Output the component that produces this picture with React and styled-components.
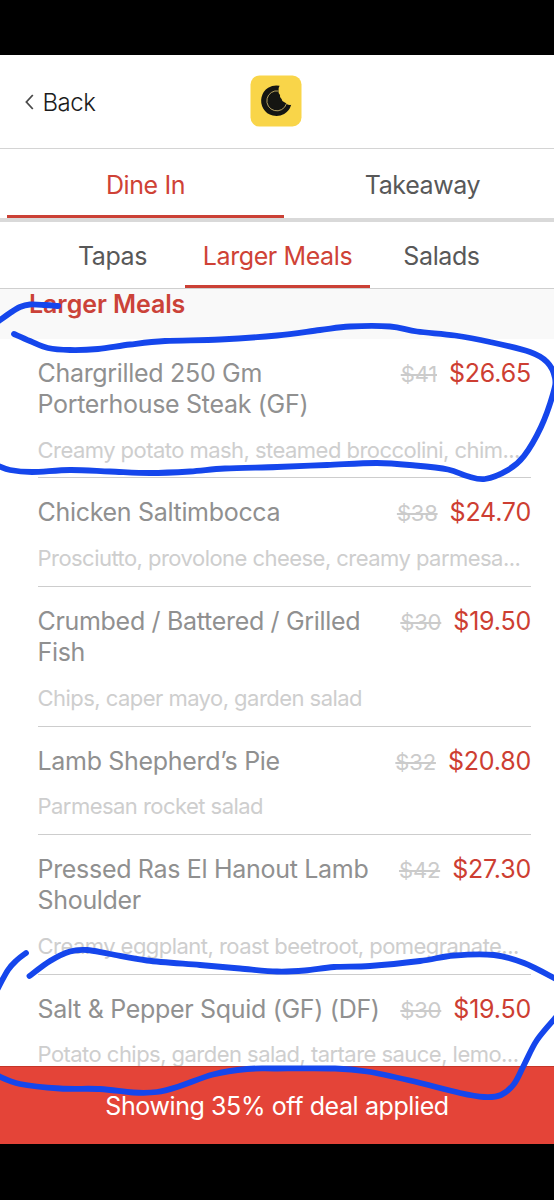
import React from "react";
import styled, { createGlobalStyle } from "styled-components";

const GlobalStyle = createGlobalStyle`
  body {
    margin: 0;
    background: #000;
    font-family: Inter, "Liberation Sans", sans-serif;
  }
`;

const Screen = styled.div`
  position: relative;
  width: 554px;
  height: 1200px;
  padding: 55px 0 56px;
  box-sizing: border-box;
  display: flex;
  flex-direction: column;
  overflow: hidden;
  background: #000;
`;

const Header = styled.header`
  flex: none;
  height: 94px;
  padding: 0 26px 0 24px;
  box-sizing: border-box;
  display: grid;
  grid-template-columns: 1fr 52px 1fr;
  align-items: center;
  background: #fff;
  border-bottom: 1px solid #d4d4d4;
`;

const BackButton = styled.button`
  padding: 2px 0 0;
  border: 0;
  display: flex;
  align-items: center;
  gap: 7.5px;
  background: none;
  color: #1c1c1c;
  font: 300 24px/30px Inter, sans-serif;
  letter-spacing: -0.5px;
  svg {
    margin-top: -2px;
  }
`;

const Logo = styled.svg`
  display: block;
  margin-top: -2px;
`;

const ModeTabs = styled.nav`
  flex: none;
  height: 73px;
  padding: 0 7px;
  box-sizing: border-box;
  display: grid;
  grid-template-columns: 277px 1fr;
  background: #fff;
  border-bottom: 4px solid #d9d9d9;
`;

const Tab = styled.div`
  height: ${props => props.$height}px;
  padding: ${props => props.$padding || "0"};
  box-sizing: border-box;
  border-bottom: 3px solid ${props => (props.$active ? "#cb4035" : "transparent")};
  display: flex;
  justify-content: center;
  align-items: center;
  color: ${props => (props.$active ? "#cf4236" : "#585858")};
  font-size: 25px;
  font-weight: 400;
  letter-spacing: -0.4px;
  white-space: nowrap;
`;

const CategoryTabs = styled.nav`
  flex: none;
  height: 67px;
  padding-left: 40px;
  box-sizing: border-box;
  display: grid;
  grid-template-columns: 145px 185px 143px;
  background: #fff;
  border-bottom: 1px solid #cfcfcf;
`;

const Menu = styled.main`
  flex: 1;
  min-height: 0;
  overflow: hidden;
  background: #fff;
`;

const SectionTitle = styled.h2`
  height: 50px;
  margin: 0;
  padding-left: 29px;
  box-sizing: border-box;
  background: #f9f9f9;
  color: #cb4238;
  font-size: 25px;
  font-weight: 600;
  line-height: 30px;
  letter-spacing: -0.08px;
`;

const Dish = styled.article`
  margin: 0 23px 0 37.5px;
  padding: 19px 0 13.46px;
  border-bottom: 1px solid #cdcdcd;
`;

const DishTop = styled.div`
  display: flex;
  justify-content: space-between;
  align-items: flex-start;
`;

const DishName = styled.h3`
  width: 345px;
  margin: 0;
  color: #909090;
  font-size: 25px;
  font-weight: 400;
  line-height: 30.8px;
  letter-spacing: -0.31px;
  white-space: pre-line;
`;

const Prices = styled.div`
  height: 30.8px;
  display: flex;
  align-items: baseline;
  gap: 12px;
  line-height: 30.8px;
`;

const OldPrice = styled.s`
  color: #cbcbcb;
  font-size: 22px;
  font-weight: 400;
  letter-spacing: -0.2px;
`;

const NewPrice = styled.span`
  color: #cd3e32;
  font-size: 25px;
  font-weight: 400;
  letter-spacing: -0.2px;
`;

const Description = styled.p`
  margin: 16px 0 0;
  color: #cecece;
  font-size: 22px;
  font-weight: 400;
  line-height: 28.4px;
  letter-spacing: -0.54px;
  white-space: nowrap;
`;

const DealBar = styled.footer`
  flex: none;
  height: 78px;
  padding-top: 1px;
  box-sizing: border-box;
  border-top: 1px solid #c53528;
  display: flex;
  justify-content: center;
  align-items: center;
  background: #e44438;
  color: #fff;
  font-size: 25px;
  font-weight: 400;
  line-height: 30px;
  letter-spacing: -0.4px;
`;

const Ink = styled.svg`
  position: absolute;
  top: 0;
  left: 0;
  pointer-events: none;
`;

const dishes = [
  {
    name: "Chargrilled 250 Gm\nPorterhouse Steak (GF)",
    oldPrice: "$41",
    price: "$26.65",
    text: "Creamy potato mash, steamed broccolini, chim...",
  },
  {
    name: "Chicken Saltimbocca",
    oldPrice: "$38",
    price: "$24.70",
    text: "Prosciutto, provolone cheese, creamy parmesa...",
  },
  {
    name: "Crumbed / Battered / Grilled\nFish",
    oldPrice: "$30",
    price: "$19.50",
    text: "Chips, caper mayo, garden salad",
  },
  {
    name: "Lamb Shepherd’s Pie",
    oldPrice: "$32",
    price: "$20.80",
    text: "Parmesan rocket salad",
  },
  {
    name: "Pressed Ras El Hanout Lamb\nShoulder",
    oldPrice: "$42",
    price: "$27.30",
    text: "Creamy eggplant, roast beetroot, pomegranate...",
  },
  {
    name: "Salt & Pepper Squid (GF) (DF)",
    oldPrice: "$30",
    price: "$19.50",
    text: "Potato chips, garden salad, tartare sauce, lemo...",
  },
];

// freehand marker strokes, as sampled points
const strokes = [
  [[58, 306], [45, 305], [30, 304.5], [20, 307], [10, 313], [-4, 323]],
  [
    [14, 334], [30, 341], [48, 348], [70, 350], [98, 349], [130, 344.5], [165, 341], [220, 339.5],
    [277, 335.5], [320, 330], [350, 326.5], [390, 326.5], [417, 331.5], [455, 335.5], [490, 342],
    [530, 352], [547, 362], [555, 378], [553, 394], [541, 427], [524, 456], [508, 470], [485, 479],
    [467, 476], [448, 469.5], [415, 465.5], [377, 463], [327, 465], [277, 467], [225, 468.5],
    [190, 471.5], [150, 473], [110, 471.5], [70, 470], [32, 472], [10, 470], [-4, 465],
  ],
  [[26, 953], [17, 960], [8, 970], [-3, 990]],
  [
    [29.5, 976], [50, 961], [70, 951.5], [87, 950], [110, 954], [147, 960.5], [200, 965],
    [240, 968.5], [277, 971.5], [305, 970.5], [334, 967], [370, 966], [420, 961], [454, 955.5],
    [494, 955], [524, 963], [556, 979],
  ],
  [
    [557, 1016], [537, 1040], [524, 1065], [514, 1084], [501, 1095], [484, 1097], [460, 1093],
    [410, 1080.5], [367, 1071.5], [335, 1068.5], [277, 1068.5], [247, 1069], [213, 1074.5],
    [180, 1086], [157, 1092], [133, 1092.5], [100, 1089], [60, 1088.5], [20, 1084], [-4, 1075],
  ],
];

const smoothPath = points => {
  let d = `M${points[0].join(" ")}`;
  for (let i = 0; i < points.length - 1; i++) {
    const p0 = points[i - 1] || points[i];
    const p1 = points[i];
    const p2 = points[i + 1];
    const p3 = points[i + 2] || p2;
    d += ` C${p1[0] + (p2[0] - p0[0]) / 6} ${p1[1] + (p2[1] - p0[1]) / 6}`;
    d += ` ${p2[0] - (p3[0] - p1[0]) / 6} ${p2[1] - (p3[1] - p1[1]) / 6}`;
    d += ` ${p2[0]} ${p2[1]}`;
  }
  return d;
};

const App = () => {
  return (
    <Screen>
      <GlobalStyle />
      <Header>
        <BackButton>
          <svg width="11" height="18" viewBox="0 0 11 18" fill="none" stroke="#4a4a4a" strokeWidth="1.8">
            <path d="M8.8 2 L2.4 9 L8.8 16" />
          </svg>
          Back
        </BackButton>
        <Logo width="52" height="52" viewBox="0 0 52 52">
          <rect x="0.5" y="0.5" width="51" height="51" rx="9" fill="#f9d549" />
          <path
            d="M29.6 10.8 A15.3 15.3 0 1 0 41.2 29.8 Q38.8 30.4 36.6 29 Q36 27.6 34.4 27.2 Q31.8 26.4 31.6 24 Q29.4 22.4 30 20 Q28 18.4 28.6 15.4 Q28.4 12.6 29.6 10.8 Z"
            fill="#151512"
          />
          <path
            d="M28.6 16 A10 10 0 1 0 36.4 28.8"
            fill="none"
            stroke="#c9b26a"
            strokeWidth="0.9"
          />
        </Logo>
      </Header>
      <ModeTabs>
        <Tab $active $height={69} $padding="5px 0 0">Dine In</Tab>
        <Tab $height={69} $padding="5px 0 0 14px">Takeaway</Tab>
      </ModeTabs>
      <CategoryTabs>
        <Tab $height={66} $padding="4px 0 0">Tapas</Tab>
        <Tab $active $height={66} $padding="4px 0 0">Larger Meals</Tab>
        <Tab $height={66} $padding="4px 0 0">Salads</Tab>
      </CategoryTabs>
      <Menu>
        <SectionTitle>Larger Meals</SectionTitle>
        {dishes.map(dish => (
          <Dish key={dish.name}>
            <DishTop>
              <DishName>{dish.name}</DishName>
              <Prices>
                <OldPrice>{dish.oldPrice}</OldPrice>
                <NewPrice>{dish.price}</NewPrice>
              </Prices>
            </DishTop>
            <Description>{dish.text}</Description>
          </Dish>
        ))}
      </Menu>
      <DealBar>Showing 35% off deal applied</DealBar>
      <Ink width="554" height="1200" viewBox="0 0 554 1200">
        {strokes.map((points, i) => (
          <path
            key={i}
            d={smoothPath(points)}
            fill="none"
            stroke="#1546ec"
            strokeWidth="5.8"
            strokeLinecap="round"
          />
        ))}
      </Ink>
    </Screen>
  );
};

export default App;
